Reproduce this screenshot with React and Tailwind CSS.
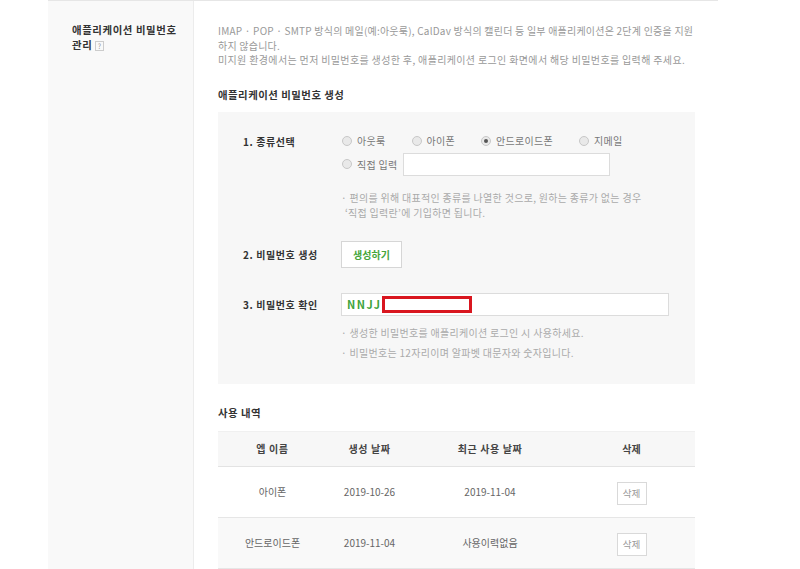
import React from "react";

const font = { fontFamily: '"Noto Sans CJK KR", "Noto Sans", sans-serif' };

const Radio = ({ checked, label }) => (
  <label className="flex items-center gap-[5px] text-[10px] tracking-[0.3px] text-[#777]">
    <span className="w-[10px] h-[10px] rounded-full border border-[#c8c8c8] bg-[#e9e9e9] flex items-center justify-center">
      {checked && <span className="w-[4px] h-[4px] rounded-full bg-[#555]" />}
    </span>
    {label}
  </label>
);

const rows = [
  { name: "아이폰", created: "2019-10-26", last: "2019-11-04", bg: "bg-white" },
  { name: "안드로이드폰", created: "2019-11-04", last: "사용이력없음", bg: "bg-[#f9f9f9]" },
];

const App = () => {
  return (
    <div className="w-[800px] h-[569px] bg-white overflow-hidden" style={font}>
      <div className="ml-[48px] w-[670px] h-full border-t border-[#e6e6e6] flex">
        {/* sidebar */}
        <div className="w-[146px] shrink-0 bg-[#f9f9f9] border-r border-[#ececec] pl-[24px] pt-[21px]">
          <p className="text-[10.4px] font-bold text-[#333] leading-[15px] tracking-[0.6px]">
            애플리케이션 비밀번호
            <br />
            관리{" "}
            <span className="inline-flex items-center justify-center w-[9px] h-[10px] border border-[#ccc] text-[7px] text-[#999] font-normal leading-none align-middle">
              ?
            </span>
          </p>
        </div>

        {/* content */}
        <div className="flex-1 min-w-0 pl-[24px] pr-[23px] pt-[23px]">
          <p className="text-[10px] tracking-[0.22px] text-[#999] leading-[14.5px] whitespace-nowrap">
            IMAP · POP · SMTP 방식의 메일(예:아웃룩), CalDav 방식의 캘린더 등 일부 애플리케이션은 2단계 인증을 지원
            <br />
            하지 않습니다.
            <br />
            <span className="tracking-[0.35px]">
              미지원 환경에서는 먼저 비밀번호를 생성한 후, 애플리케이션 로그인 화면에서 해당 비밀번호를 입력해 주세요.
            </span>
          </p>

          <h3 className="mt-[20px] text-[10.4px] font-bold text-[#333] leading-[14px] tracking-[0.5px]">
            애플리케이션 비밀번호 생성
          </h3>

          <div className="mt-[10px] bg-[#f7f7f7] h-[272px] pl-[25px] pt-[22px]">
            {/* row 1 */}
            <div className="flex">
              <div className="w-[98px] shrink-0 text-[10px] font-bold text-[#333] leading-[14px] pt-[1px] tracking-[0.6px]">
                1. 종류선택
              </div>
              <div className="flex flex-col">
                <div className="flex items-center h-[14px] gap-[26px] pl-[1px]">
                  <Radio label="아웃룩" />
                  <Radio label="아이폰" />
                  <Radio checked label="안드로이드폰" />
                  <Radio label="지메일" />
                </div>
                <div className="flex items-center gap-[5px] mt-[5px] pl-[1px]">
                  <Radio label="직접 입력" />
                  <div className="w-[207px] h-[23px] bg-white border border-[#dcdcdc]" />
                </div>
                <p className="mt-[14px] text-[10px] tracking-[0.3px] text-[#aaa] leading-[15px]">
                  · 편의를 위해 대표적인 종류를 나열한 것으로, 원하는 종류가 없는 경우
                  <br />
                  <span className="pl-[4px]">‘직접 입력란’에 기입하면 됩니다.</span>
                </p>
              </div>
            </div>

            {/* row 2 */}
            <div className="flex items-center mt-[21px]">
              <div className="w-[98px] shrink-0 text-[10px] font-bold text-[#333] tracking-[0.6px]">2. 비밀번호 생성</div>
              <button className="w-[61px] h-[27px] bg-white border border-[#d6d6d6] text-[10px] font-bold text-[#45a53a]">
                생성하기
              </button>
            </div>

            {/* row 3 */}
            <div className="flex items-center mt-[25px]">
              <div className="w-[98px] shrink-0 text-[10px] font-bold text-[#333] tracking-[0.6px]">3. 비밀번호 확인</div>
              <div className="w-[328px] h-[23px] bg-white border border-[#dcdcdc] flex items-center pl-[5px]">
                <span className="text-[11px] font-bold text-[#3ea33a] tracking-[1.5px]">NNJJ</span>
                <span className="ml-[1px] w-[90px] h-[17px] border-[3px] border-[#d9161f] bg-white" />
              </div>
            </div>
            <div className="pl-[98px] mt-[10px] text-[10px] tracking-[0.3px] text-[#aaa] leading-[14px]">
              <p>· 생성한 비밀번호를 애플리케이션 로그인 시 사용하세요.</p>
              <p className="mt-[6px]">· 비밀번호는 12자리이며 알파벳 대문자와 숫자입니다.</p>
            </div>
          </div>

          <h3 className="mt-[22px] text-[10.4px] font-bold text-[#333] leading-[14px] tracking-[0.5px]">사용 내역</h3>

          <table className="mt-[11px] w-full border-collapse text-center">
            <thead>
              <tr className="bg-[#f7f7f7] h-[35px] border-t border-[#f0f0f0] border-b border-b-[#e3e3e3]">
                <th className="w-[109px] text-[10px] font-bold text-[#444] tracking-[0.6px]">엡 이름</th>
                <th className="w-[85px] text-[10px] font-bold text-[#444] tracking-[0.6px]">생성 날짜</th>
                <th className="w-[156px] text-[10px] font-bold text-[#444] tracking-[0.6px]">최근 사용 날짜</th>
                <th className="text-[10px] font-bold text-[#444]">삭제</th>
              </tr>
            </thead>
            <tbody>
              {rows.map((r) => (
                <tr key={r.name} className={`${r.bg} h-[51px] border-b border-[#e6e6e6]`}>
                  <td className="text-[10px] text-[#666]">{r.name}</td>
                  <td className="text-[10px] text-[#666]">{r.created}</td>
                  <td className="text-[10px] text-[#666]">{r.last}</td>
                  <td>
                    <button className="w-[30px] h-[23px] bg-white border border-[#d9d9d9] text-[9.6px] text-[#999]">
                      삭제
                    </button>
                  </td>
                </tr>
              ))}
            </tbody>
          </table>
        </div>
      </div>
    </div>
  );
};

export default App;
